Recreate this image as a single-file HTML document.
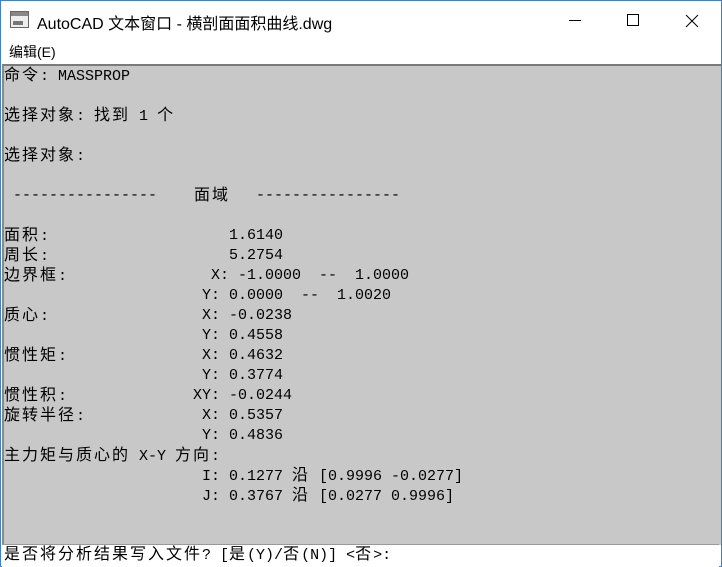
<!DOCTYPE html><html><head><meta charset="utf-8"><style>
body{margin:0;width:722px;height:567px;position:relative;background:#fff;overflow:hidden;font-family:"Liberation Sans","Noto Sans CJK SC",sans-serif}
.win{position:absolute;left:0;top:0;width:720px;height:565px;border:1px solid #3d7fd0;background:#fff}
.title{position:absolute;left:36px;top:9px;font-size:16px;color:#000}
.menu{position:absolute;left:8px;top:41px;font-size:14px}
.con{position:absolute;left:1px;top:63px;width:717px;height:479px;background:#c8c8c8;border-top:2px solid #7a7a7a;border-left:2px solid #8a8a8a}
.t{position:absolute;font-family:"Liberation Mono","Noto Sans CJK SC",monospace;font-size:15px;color:#000;white-space:pre;line-height:20px}
.c{font-size:16px;letter-spacing:2px}
.inp{position:absolute;left:1px;top:543px;width:717px;height:22px;border-top:1px solid #999;background:#fff}
</style></head><body><div class="win">
<svg style="position:absolute;left:9px;top:10px" width="20" height="18"><rect x="0.5" y="0.5" width="18" height="16" fill="#eee" stroke="#666"/><rect x="1" y="1" width="17" height="4" fill="#888"/><rect x="3" y="10" width="10" height="4" fill="#777"/></svg>
<div class="title">AutoCAD 文本窗口 - 横剖面面积曲线.dwg</div>
<svg style="position:absolute;left:560px;top:12px" width="140" height="16"><line x1="8" y1="7.5" x2="20" y2="7.5" stroke="#000"/><rect x="66.5" y="1.5" width="11" height="11" fill="none" stroke="#000"/><path d="M125 2L137 14M137 2L125 14" stroke="#000"/></svg>
<div class="menu">编辑(E)</div>
<div class="con"></div>
<div class="inp"></div>
<div class="t" style="left:3px;top:65px"><span class="c">命令</span>: MASSPROP</div>
<div class="t" style="left:3px;top:105px"><span class="c">选择对象</span>: <span class="c">找到</span> 1 <span class="c">个</span></div>
<div class="t" style="left:3px;top:145px"><span class="c">选择对象</span>:</div>
<div class="t" style="left:12px;top:185px">----------------</div>
<div class="t" style="left:193px;top:185px"><span class="c">面域</span></div>
<div class="t" style="left:255px;top:185px">----------------</div>
<div class="t" style="left:3px;top:225px"><span class="c">面积</span>:</div><div class="t" style="left:228px;top:225px">1.6140</div>
<div class="t" style="left:3px;top:245px"><span class="c">周长</span>:</div><div class="t" style="left:228px;top:245px">5.2754</div>
<div class="t" style="left:3px;top:265px"><span class="c">边界框</span>:</div><div class="t" style="left:210px;top:265px">X: -1.0000  --  1.0000</div>
<div class="t" style="left:201px;top:285px">Y: 0.0000  --  1.0020</div>
<div class="t" style="left:3px;top:305px"><span class="c">质心</span>:</div><div class="t" style="left:201px;top:305px">X: -0.0238</div>
<div class="t" style="left:201px;top:325px">Y: 0.4558</div>
<div class="t" style="left:3px;top:345px"><span class="c">惯性矩</span>:</div><div class="t" style="left:201px;top:345px">X: 0.4632</div>
<div class="t" style="left:201px;top:365px">Y: 0.3774</div>
<div class="t" style="left:3px;top:385px"><span class="c">惯性积</span>:</div><div class="t" style="left:192px;top:385px">XY: -0.0244</div>
<div class="t" style="left:3px;top:405px"><span class="c">旋转半径</span>:</div><div class="t" style="left:201px;top:405px">X: 0.5357</div>
<div class="t" style="left:201px;top:425px">Y: 0.4836</div>
<div class="t" style="left:3px;top:445px"><span class="c">主力矩与质心的</span> X-Y <span class="c">方向</span>:</div>
<div class="t" style="left:201px;top:465px">I: 0.1277 <span class="c">沿</span> [0.9996 -0.0277]</div>
<div class="t" style="left:201px;top:485px">J: 0.3767 <span class="c">沿</span> [0.0277 0.9996]</div>
<div class="t" style="left:3px;top:544px"><span class="c">是否将分析结果写入文件</span>? [<span class="c">是</span>(Y)/<span class="c">否</span>(N)] &lt;<span class="c">否</span>&gt;:</div>
</div></body></html>
